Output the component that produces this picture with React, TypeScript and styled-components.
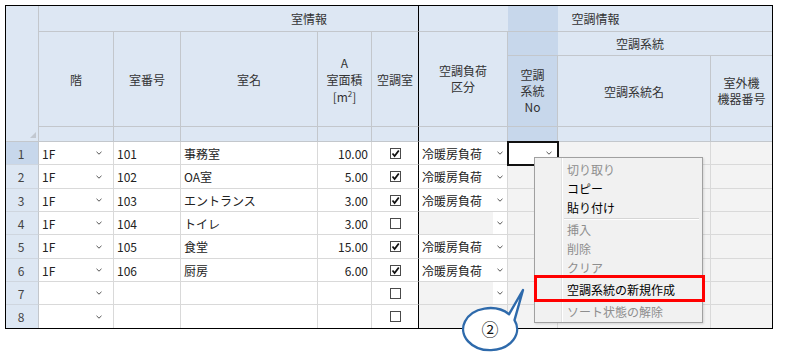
import styled, { createGlobalStyle } from "styled-components";

const GlobalStyle = createGlobalStyle`
  * { box-sizing: border-box; }
  html, body {
    margin: 0;
    padding: 0;
    background: #fff;
    font-family: "Noto Sans CJK JP", "Noto Sans", sans-serif;
    font-size: 12px;
    color: #222;
  }
`;

const COLS = "33px 75px 67px 137px 54px 47px 89px 50px 153px 61px";
const HEAD_BG = "#dde7f3";
const HEAD_SEL = "#c7d7eb";
const HEAD_LINE = "#c3c7cc";
const BODY_LINE = "#d9d9d9";
const READONLY = "#f3f3f3";

const Page = styled.div`
  position: relative;
  width: 790px;
  height: 356px;
  overflow: hidden;
`;

const Table = styled.div`
  margin: 5px 0 0 5px;
  width: 768px;
  border: 1px solid #000;
`;

const Head = styled.div`
  display: grid;
  grid-template-columns: ${COLS};
  grid-template-rows: 26px 24px 71px 15px;
  background: ${HEAD_BG};
`;

const SelBand = styled.div`
  grid-column: 8;
  grid-row: 1 / 5;
  background: ${HEAD_SEL};
`;

const HeadCell = styled.div<{ $col: string; $row: string; $edge?: "thick" | "none"; $padLeft?: number; $lh?: number }>`
  grid-column: ${(p) => p.$col};
  grid-row: ${(p) => p.$row};
  display: flex;
  flex-direction: column;
  align-items: center;
  justify-content: center;
  padding-left: ${(p) => p.$padLeft ?? 0}px;
  line-height: ${(p) => p.$lh ?? 15}px;
  color: #333;
  text-align: center;
  border-bottom: 1px solid ${HEAD_LINE};
  border-right: ${(p) => (p.$edge === "none" ? "none" : `1px solid ${p.$edge === "thick" ? "#000" : HEAD_LINE}`)};
`;

const Corner = styled.div`
  grid-column: 1;
  grid-row: 1 / 5;
  display: flex;
  align-items: flex-end;
  justify-content: flex-end;
  padding: 0 2px 3px 0;
  border-right: 1px solid ${HEAD_LINE};
  border-bottom: 1px solid ${HEAD_LINE};
`;

const Triangle = styled.span`
  width: 0;
  height: 0;
  border-left: 6px solid transparent;
  border-bottom: 6px solid #c2c8d0;
`;

const Sup = styled.sup`
  font-size: 8px;
  line-height: 0;
`;

const Row = styled.div<{ $h: number }>`
  display: grid;
  grid-template-columns: ${COLS};
  height: ${(p) => p.$h}px;
  & > div { border-bottom: 1px solid ${BODY_LINE}; }
  &:last-child > div { border-bottom: none; }
`;

const RowNo = styled.div<{ $sel?: boolean }>`
  display: flex;
  align-items: center;
  justify-content: center;
  padding-right: 2px;
  color: #444;
  background: ${(p) => (p.$sel ? HEAD_SEL : HEAD_BG)};
  border-right: 1px solid ${HEAD_LINE};
  && { border-bottom-color: #cfd6df; }
`;

const Cell = styled.div<{ $align?: "left" | "right" | "center"; $bg?: string; $edge?: "thick" | "none"; $sel?: boolean; $padRight?: number }>`
  display: flex;
  align-items: center;
  justify-content: ${(p) => (p.$align === "right" ? "flex-end" : p.$align === "center" ? "center" : "space-between")};
  padding: 0 ${(p) => p.$padRight ?? 3}px 0 3px;
  white-space: nowrap;
  overflow: hidden;
  background: ${(p) => p.$bg ?? "#fff"};
  border-right: ${(p) => (p.$edge === "none" ? "none" : `1px solid ${p.$edge === "thick" ? "#000" : BODY_LINE}`)};
  ${(p) =>
    p.$sel &&
    `position: relative; z-index: 1; outline: 2px solid #111; outline-offset: -1px; overflow: visible;`}
`;

const ChevBox = styled.span<{ $white?: boolean }>`
  align-self: stretch;
  width: 14px;
  display: flex;
  align-items: center;
  justify-content: center;
  background: ${(p) => (p.$white ? "#fff" : "transparent")};
`;

const Box = styled.span`
  width: 11px;
  height: 11px;
  border: 1px solid #4a4a4a;
  background: #fff;
  display: inline-flex;
  align-items: center;
  justify-content: center;
`;

const Menu = styled.div`
  position: absolute;
  left: 534px;
  top: 157px;
  width: 169px;
  height: 166px;
  padding: 2px 0 1px;
  border: 1px solid #a0a0a0;
  background: linear-gradient(to right, #f1f1f1 26px, #e2e2e2 26px, #e2e2e2 27px, #fff 27px, #fff 28px, #f1f1f1 28px);
  box-shadow: 1px 1px 2px rgba(0, 0, 0, 0.12);
  display: flex;
  flex-direction: column;
  z-index: 5;
`;

const Item = styled.div<{ $off?: boolean }>`
  height: 19px;
  display: flex;
  align-items: center;
  padding-left: 32px;
  color: ${(p) => (p.$off ? "#8e8e8e" : "#000")};
`;

const MarkedItem = styled(Item)`
  height: 21px;
  margin: 1px 0 3px 2px;
  padding: 2px 0 0 30px;
  outline: 3px solid #ff0000;
`;

const Sep = styled.div`
  height: 3px;
  margin: 0 3px 0 29px;
  border-top: 1px solid transparent;
  &::after {
    content: "";
    display: block;
    height: 1px;
    background: #d5d5d5;
    box-shadow: 0 1px 0 #fff;
  }
`;

const Callout = styled.svg`
  position: absolute;
  left: 455px;
  top: 285px;
  z-index: 6;
`;

function Chevron() {
  return (
    <svg width="6" height="4" viewBox="0 0 6 4">
      <polyline points="0.5,0.8 3,3.2 5.5,0.8" fill="none" stroke="#555" strokeWidth="1" />
    </svg>
  );
}

function CheckBox({ on }: { on: boolean }) {
  return (
    <Box>
      {on && (
        <svg width="9" height="9" viewBox="0 0 9 9">
          <polyline points="1.5,4.5 3.6,7 7.8,1.5" fill="none" stroke="#111" strokeWidth="1.8" />
        </svg>
      )}
    </Box>
  );
}

interface IRoom {
  floor: string;
  no: string;
  name: string;
  area: string;
  ac: boolean;
  load: string;
}

const rooms: IRoom[] = [
  { floor: "1F", no: "101", name: "事務室", area: "10.00", ac: true, load: "冷暖房負荷" },
  { floor: "1F", no: "102", name: "OA室", area: "5.00", ac: true, load: "冷暖房負荷" },
  { floor: "1F", no: "103", name: "エントランス", area: "3.00", ac: true, load: "冷暖房負荷" },
  { floor: "1F", no: "104", name: "トイレ", area: "3.00", ac: false, load: "" },
  { floor: "1F", no: "105", name: "食堂", area: "15.00", ac: true, load: "冷暖房負荷" },
  { floor: "1F", no: "106", name: "厨房", area: "6.00", ac: true, load: "冷暖房負荷" },
  { floor: "", no: "", name: "", area: "", ac: false, load: "" },
  { floor: "", no: "", name: "", area: "", ac: false, load: "" },
];

// grid rows alternate 23/24px like the original scaled screen
const heights = [23, 24, 23, 23, 24, 23, 23, 23];

export default function App() {
  return (
    <Page>
      <GlobalStyle />
      <Table>
        <Head>
          <SelBand />
          <Corner>
            <Triangle />
          </Corner>
          <HeadCell $col="2 / 7" $row="1" $edge="thick" $padLeft={161}>室情報</HeadCell>
          <HeadCell $col="7 / 11" $row="1" $edge="none">空調情報</HeadCell>
          <HeadCell $col="2" $row="2 / 4">階</HeadCell>
          <HeadCell $col="3" $row="2 / 4">室番号</HeadCell>
          <HeadCell $col="4" $row="2 / 4">室名</HeadCell>
          <HeadCell $col="5" $row="2 / 4" $lh={17}>
            <span>A</span>
            <span>室面積</span>
            <span>
              [m<Sup>2</Sup>]
            </span>
          </HeadCell>
          <HeadCell $col="6" $row="2 / 4" $edge="thick">空調室</HeadCell>
          <HeadCell $col="7" $row="2 / 4" $lh={16}>
            <span>空調負荷</span>
            <span>区分</span>
          </HeadCell>
          <HeadCell $col="8 / 11" $row="2" $edge="none">空調系統</HeadCell>
          <HeadCell $col="8" $row="3" $lh={16}>
            <span>空調</span>
            <span>系統</span>
            <span>No</span>
          </HeadCell>
          <HeadCell $col="9" $row="3">空調系統名</HeadCell>
          <HeadCell $col="10" $row="3" $edge="none" $lh={16}>
            <span>室外機</span>
            <span>機器番号</span>
          </HeadCell>
          {[2, 3, 4, 5, 6, 7, 8, 9, 10].map((c) => (
            <HeadCell key={c} $col={String(c)} $row="4" $edge={c === 6 ? "thick" : c === 10 ? "none" : undefined} />
          ))}
        </Head>
        {rooms.map((r, i) => (
          <Row key={i} $h={heights[i]}>
            <RowNo $sel={i === 0}>{i + 1}</RowNo>
            <Cell $padRight={7}>
              <span>{r.floor}</span>
              <ChevBox>
                <Chevron />
              </ChevBox>
            </Cell>
            <Cell>{r.no}</Cell>
            <Cell>{r.name}</Cell>
            <Cell $align="right">{r.area}</Cell>
            <Cell $align="center" $edge="thick">
              <CheckBox on={r.ac} />
            </Cell>
            <Cell $padRight={0} $bg={r.load ? "#fff" : READONLY}>
              <span>{r.load}</span>
              {i < 7 && (
                <ChevBox $white={!r.load}>
                  <Chevron />
                </ChevBox>
              )}
            </Cell>
            <Cell $padRight={1} $bg={i === 0 ? "#fff" : READONLY} $sel={i === 0}>
              <span />
              {i === 0 && (
                <ChevBox>
                  <Chevron />
                </ChevBox>
              )}
            </Cell>
            <Cell $bg={READONLY} />
            <Cell $bg={READONLY} $edge="none" />
          </Row>
        ))}
      </Table>

      <Menu>
        <Item $off>切り取り</Item>
        <Item>コピー</Item>
        <Item>貼り付け</Item>
        <Sep />
        <Item $off>挿入</Item>
        <Item $off>削除</Item>
        <Item $off>クリア</Item>
        <MarkedItem>空調系統の新規作成</MarkedItem>
        <Item $off>ソート状態の解除</Item>
      </Menu>

      <Callout width="75" height="70" viewBox="0 0 75 70">
        <path
          d="M 54.1 29.2 L 68 5 L 59.5 35.1 A 27 21 0 1 1 54.1 29.2 Z"
          fill="#fff"
          stroke="#2e6aab"
          strokeWidth="2.4"
          strokeLinejoin="round"
        />
        <text x="35" y="51" textAnchor="middle" fontSize="17" fill="#111" fontFamily="Noto Sans CJK JP, sans-serif">
          ②
        </text>
      </Callout>
    </Page>
  );
}
